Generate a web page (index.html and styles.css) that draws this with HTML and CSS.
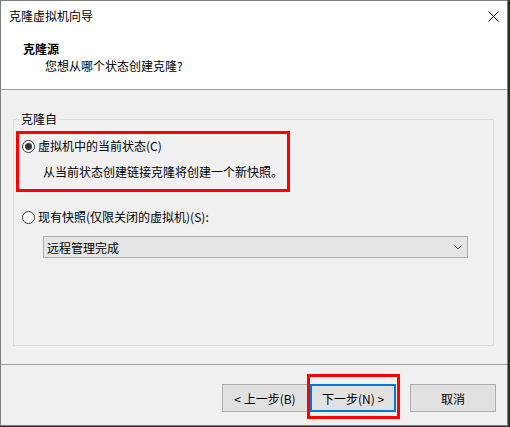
FILE: index.html
```html
<!DOCTYPE html>
<html lang="zh-CN">
<head>
<meta charset="utf-8">
<title>克隆虚拟机向导</title>
<link rel="stylesheet" href="styles.css">
</head>
<body>
<div class="window">
  <div class="header">
    <div class="titlebar">
      <span class="title">克隆虚拟机向导</span>
      <svg class="close" width="11" height="11" viewBox="0 0 11 11"><path d="M0.5 0.5 L10.5 10.5 M10.5 0.5 L0.5 10.5" stroke="#000" stroke-width="1" fill="none"/></svg>
    </div>
    <div class="heading">克隆源</div>
    <div class="subheading">您想从哪个状态创建克隆?</div>
  </div>
  <div class="main">
    <fieldset class="group">
      <legend>克隆自</legend>
      <div class="highlight">
        <div class="radio-row"><span class="radio checked"></span><span>虚拟机中的当前状态(C)</span></div>
        <div class="desc">从当前状态创建链接克隆将创建一个新快照。</div>
      </div>
      <div class="radio-row second"><span class="radio"></span><span>现有快照(仅限关闭的虚拟机)(S):</span></div>
      <div class="combo"><span>远程管理完成</span><svg class="chevron" width="8" height="5" viewBox="0 0 8 5"><path d="M0.5 0.5 L4 4 L7.5 0.5" stroke="#555" stroke-width="1" fill="none"/></svg></div>
    </fieldset>
  </div>
  <div class="footer">
    <button class="btn">&lt; 上一步(B)</button>
    <button class="btn next">下一步(N) &gt;</button>
    <button class="btn cancel">取消</button>
  </div>
</div>
</body>
</html>
```
FILE: styles.css
```css
* { box-sizing: border-box; }
html, body { margin: 0; padding: 0; }
body {
  width: 510px;
  height: 427px;
  overflow: hidden;
  background: #2b2b2b;
  font-family: "Noto Sans CJK SC", "Microsoft YaHei", sans-serif;
  font-size: 12px;
  color: #000;
}
.window {
  width: 508px;
  height: 426px;
  border: 1px solid #7f7f7f;
  background: #f0f0f0;
  display: flex;
  flex-direction: column;
}
.header {
  flex: none;
  height: 89px;
  background: #fff;
  border-bottom: 1px solid #a0a0a0;
}
.titlebar {
  height: 30px;
  display: flex;
  align-items: center;
  justify-content: space-between;
  padding: 0 8px 0 8px;
  line-height: 16px;
}
.close { display: block; }
.heading {
  margin-top: 9px;
  padding-left: 22px;
  font-weight: bold;
  line-height: 17px;
}
.subheading {
  padding-left: 44px;
  line-height: 17px;
}
.main {
  flex: 1;
  padding: 21px 13px 0 12px;
}
.group {
  margin: 0;
  padding: 0;
  border: 1px solid #dcdcdc;
  min-width: 0;
}
.group legend {
  margin-left: 5px;
  padding: 0 2px;
  line-height: 16px;
  font-size: 12px;
}
.highlight {
  margin: 4px 0 0 2px;
  width: 274px;
  border: 3px solid #f00;
  padding: 4px 0 9px 3px;
}
.radio-row {
  display: flex;
  align-items: center;
  height: 16px;
  line-height: 16px;
}
.radio {
  flex: none;
  position: relative;
  width: 13px;
  height: 13px;
  border-radius: 50%;
  border: 1px solid #333;
  background: #fff;
  margin-right: 3px;
}
.radio.checked::after {
  content: "";
  position: absolute;
  left: 2px;
  top: 2px;
  width: 7px;
  height: 7px;
  border-radius: 50%;
  background: #333;
}
.desc {
  margin-top: 10px;
  padding-left: 21px;
  line-height: 16px;
}
.radio-row.second {
  margin: 17px 0 0 8px;
}
.combo {
  margin: 11px 0 87px 29px;
  width: 425px;
  height: 22px;
  border: 1px solid #adadad;
  background: #e5e5e5;
  display: flex;
  align-items: center;
  justify-content: space-between;
  padding: 0 5px 0 3px;
}
.chevron { display: block; }
.footer {
  flex: none;
  height: 61px;
  border-top: 1px solid #a0a0a0;
  display: flex;
  justify-content: flex-end;
  align-items: flex-start;
  padding: 19px 11px 0 0;
}
.btn {
  width: 86px;
  height: 28px;
  border: 1px solid #adadad;
  background: #e1e1e1;
  font-family: inherit;
  font-size: 12px;
  color: #000;
  padding: 0;
  margin: 0;
}
.btn.next {
  position: relative;
  margin-left: 2px;
  border: 2px solid #0078d7;
}
.btn.next::after {
  content: "";
  position: absolute;
  left: -5px;
  top: -12px;
  right: -6px;
  bottom: -9px;
  border: 3px solid #f00;
}
.btn.cancel { margin-left: 14px; }
```
